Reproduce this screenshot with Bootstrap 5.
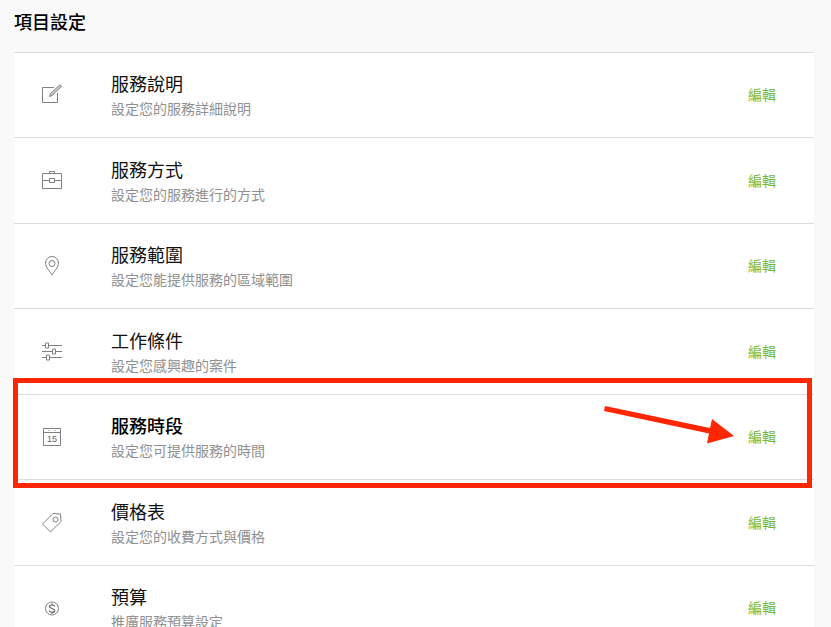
<!DOCTYPE html>
<html lang="zh-Hant">
<head>
<meta charset="utf-8">
<meta name="viewport" content="width=device-width, initial-scale=1">
<title>項目設定</title>
<link rel="stylesheet" href="https://cdn.jsdelivr.net/npm/bootstrap@5.3.0/dist/css/bootstrap.min.css">
<style>
  body { background: #f9f9f9; color: #111; font-family: "Noto Sans CJK TC", sans-serif; }
  .settings-page { padding: 7px 17px 0 14px; }
  .page-title { font-size: 18px; line-height: 28px; font-weight: 500; margin-bottom: 17px; color: #000; }
  .setting-row { min-height: 85px; padding: 0 38px 0 27px; border-top: 1px solid #dcdcdc; background: #fff; }
  .setting-row:nth-child(even) { min-height: 86px; }
  .setting-icon { width: 22px; height: 22px; margin-right: 48px; fill: none; stroke: #808080; stroke-width: 1; }
  .setting-icon text { fill: #666; stroke: none; font: 9px "Liberation Sans", sans-serif; }
  .setting-name { font-size: 18px; line-height: 26px; font-weight: 400; margin: 0; }
  .setting-note { font-size: 14px; line-height: 24px; color: #909090; margin: 0; }
  .edit-link { font-size: 14px; line-height: 20px; padding-bottom: 2px; color: #78b833; }
  .edit-link:hover { color: #5c9422; }
  .highlighted .setting-name { font-weight: 500; color: #000; }
  .highlight-frame { position: absolute; inset: -17px 2px -9px -1px; border: 5px solid #ff2600; pointer-events: none; z-index: 1; }
  .highlight-arrow { position: absolute; right: 80px; top: 8px; width: 132px; height: 44px; fill: #ff2600; pointer-events: none; }
</style>
</head>
<body>
<main class="settings-page">
  <h1 class="page-title">項目設定</h1>
  <ul class="list-unstyled mb-0">
    <li class="setting-row d-flex align-items-center">
      <svg class="setting-icon flex-shrink-0" viewBox="0 0 22 22" aria-hidden="true"><path d="M13 3.500H1.500v15h15V9"/><path fill="#ccc" d="M8.500 12.500l1-3L19 .800l1.500 1.500-9.500 9.200z"/></svg>
      <div class="flex-grow-1"><h2 class="setting-name">服務說明</h2><p class="setting-note">設定您的服務詳細說明</p></div>
      <a class="edit-link text-decoration-none" href="#description">編輯</a>
    </li>
    <li class="setting-row d-flex align-items-center">
      <svg class="setting-icon flex-shrink-0" viewBox="0 0 22 22" aria-hidden="true"><path d="M1.500 3.500h19v15h-19zM8.500 3.500v-2h5v2M1.500 10.500h7m5 0h7M8.500 8.500h5v4h-5z"/></svg>
      <div class="flex-grow-1"><h2 class="setting-name">服務方式</h2><p class="setting-note">設定您的服務進行的方式</p></div>
      <a class="edit-link text-decoration-none" href="#method">編輯</a>
    </li>
    <li class="setting-row d-flex align-items-center">
      <svg class="setting-icon flex-shrink-0" viewBox="0 0 22 22" aria-hidden="true"><path d="M11 20C9 16 4.500 12.500 4.500 8a6.500 6.500 0 0 1 13 0c0 4.500-4.500 8-6.500 12z"/><circle cx="11" cy="8.500" r="3"/></svg>
      <div class="flex-grow-1"><h2 class="setting-name">服務範圍</h2><p class="setting-note">設定您能提供服務的區域範圍</p></div>
      <a class="edit-link text-decoration-none" href="#area">編輯</a>
    </li>
    <li class="setting-row d-flex align-items-center">
      <svg class="setting-icon flex-shrink-0" viewBox="0 0 22 22" aria-hidden="true"><path d="M1 4.500h3.500m3 0H21M1 10.500h10.500m3 0H21M1 16.500h4.500m3 0H21M4.500 2h3v5h-3zM11.500 8h3v5h-3zM5.500 14h3v5h-3z"/></svg>
      <div class="flex-grow-1"><h2 class="setting-name">工作條件</h2><p class="setting-note">設定您感興趣的案件</p></div>
      <a class="edit-link text-decoration-none" href="#conditions">編輯</a>
    </li>
    <li class="setting-row highlighted d-flex align-items-center position-relative">
      <svg class="setting-icon flex-shrink-0" viewBox="0 0 22 22" aria-hidden="true"><path d="M2.500 2.500h17v17h-17zM2.500 6.500h17M7.500 4.500h1m5 0h1"/><text x="11" y="16" text-anchor="middle">15</text></svg>
      <div class="flex-grow-1"><h2 class="setting-name">服務時段</h2><p class="setting-note">設定您可提供服務的時間</p></div>
      <a class="edit-link text-decoration-none" href="#hours">編輯</a>
      <span class="highlight-frame"></span>
      <svg class="highlight-arrow" viewBox="0 0 132 44" aria-hidden="true"><path d="M3 3L108 25 110 16 132 33 105 40.500 107 30.500 2 8z"/></svg>
    </li>
    <li class="setting-row d-flex align-items-center">
      <svg class="setting-icon flex-shrink-0" viewBox="0 0 22 22" aria-hidden="true"><path d="M1.500 12L12 1.500l7.500.5.500 7.500L9.500 20z"/><circle cx="14.500" cy="7.500" r="2.500"/></svg>
      <div class="flex-grow-1"><h2 class="setting-name">價格表</h2><p class="setting-note">設定您的收費方式與價格</p></div>
      <a class="edit-link text-decoration-none" href="#prices">編輯</a>
    </li>
    <li class="setting-row d-flex align-items-center">
      <svg class="setting-icon flex-shrink-0" viewBox="0 0 22 22" aria-hidden="true"><circle cx="11" cy="11.500" r="6.500"/><path stroke="#555" stroke-width="1.200" d="M13.600 9.500C13.200 7.500 8.500 7.500 8.500 9.600c0 2.200 5.200 1.600 5.200 4 0 2.300-5 2.200-5.400-.1M11 6.500V8m0 7.200v1.600"/></svg>
      <div class="flex-grow-1"><h2 class="setting-name">預算</h2><p class="setting-note">推廣服務預算設定</p></div>
      <a class="edit-link text-decoration-none" href="#budget">編輯</a>
    </li>
  </ul>
</main>
<script src="https://cdn.jsdelivr.net/npm/bootstrap@5.3.0/dist/js/bootstrap.bundle.min.js"></script>
</body>
</html>
